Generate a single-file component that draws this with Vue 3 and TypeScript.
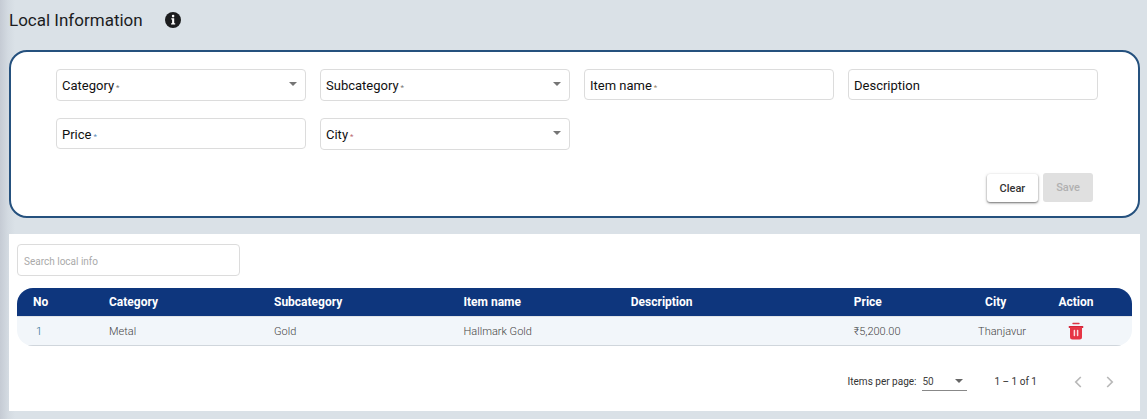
<script setup lang="ts">
import { ref } from 'vue'

interface Field {
  id: string
  label: string
  kind: 'select' | 'text'
  required: boolean
  tint: string
}

interface Item {
  no: number
  category: string
  subcategory: string
  name: string
  description: string
  price: string
  city: string
}

const fields: Field[] = [
  { id: 'category', label: 'Category', kind: 'select', required: true, tint: 'grey' },
  { id: 'subcategory', label: 'Subcategory', kind: 'select', required: true, tint: 'grey' },
  { id: 'item-name', label: 'Item name', kind: 'text', required: true, tint: 'sand' },
  { id: 'description', label: 'Description', kind: 'text', required: false, tint: 'grey' },
  { id: 'price', label: 'Price', kind: 'text', required: true, tint: 'blue' },
  { id: 'city', label: 'City', kind: 'select', required: true, tint: 'rose' },
]

const items = ref<Item[]>([
  {
    no: 1,
    category: 'Metal',
    subcategory: 'Gold',
    name: 'Hallmark Gold',
    description: '',
    price: '₹5,200.00',
    city: 'Thanjavur',
  },
])

const search = ref('')
const pageSize = ref(50)
</script>

<template>
  <main class="page">
    <header class="heading">
      <h1>Local Information</h1>
      <button type="button" class="icon-button" aria-label="Information">
        <svg width="16" height="16" viewBox="0 0 16 16">
          <circle cx="8" cy="8" r="8" fill="#1b1c1e" />
          <path d="M6.3 6.3h2.9v5h1v1.2H6.1v-1.2h1V7.5h-.8z" fill="#fff" />
          <circle cx="8.1" cy="4.1" r="1.3" fill="#fff" />
        </svg>
      </button>
    </header>

    <form class="card form-card" @submit.prevent>
      <div class="fields">
        <div v-for="field in fields" :key="field.id" class="field" :class="field.kind">
          <select v-if="field.kind === 'select'" :id="field.id">
            <option value=""></option>
          </select>
          <input v-else :id="field.id" type="text" />
          <label :for="field.id">
            {{ field.label }}<span v-if="field.required" class="star" :class="field.tint">*</span>
          </label>
          <svg v-if="field.kind === 'select'" class="arrow" width="8" height="4" viewBox="0 0 8 4">
            <path d="M0 0h8L4 4z" fill="#757575" />
          </svg>
        </div>
      </div>
      <div class="actions">
        <button type="reset" class="button clear">Clear</button>
        <button type="submit" class="button save" disabled>Save</button>
      </div>
    </form>

    <section class="list-card">
      <input
        v-model="search"
        class="search"
        type="text"
        aria-label="Search local info"
        placeholder="Search local info"
      />
      <table>
        <colgroup>
          <col class="col-no" />
          <col class="col-category" />
          <col class="col-subcategory" />
          <col class="col-name" />
          <col class="col-description" />
          <col class="col-price" />
          <col class="col-city" />
          <col />
        </colgroup>
        <thead>
          <tr>
            <th class="no">No</th>
            <th>Category</th>
            <th>Subcategory</th>
            <th>Item name</th>
            <th>Description</th>
            <th>Price</th>
            <th class="city">City</th>
            <th>Action</th>
          </tr>
        </thead>
        <tbody>
          <tr v-for="item in items" :key="item.no">
            <td class="no">{{ item.no }}</td>
            <td>{{ item.category }}</td>
            <td>{{ item.subcategory }}</td>
            <td>{{ item.name }}</td>
            <td>{{ item.description }}</td>
            <td>{{ item.price }}</td>
            <td>{{ item.city }}</td>
            <td class="action">
              <button type="button" class="icon-button" aria-label="Delete">
                <svg width="16" height="18" viewBox="0 0 16 18">
                  <path d="M5 1.5h6" stroke="#dc3545" stroke-width="1.4" stroke-linecap="round" />
                  <path d="M1.5 5h13" stroke="#d32438" stroke-width="1.8" stroke-linecap="round" />
                  <path d="M2 5h12v10a2.5 2.5 0 0 1-2.5 2.5h-7A2.5 2.5 0 0 1 2 15z" fill="#e63545" />
                  <path d="M6.4 8.5v5M9.6 8.5v5" stroke="#fbdde0" stroke-width="1.5" stroke-linecap="round" />
                </svg>
              </button>
            </td>
          </tr>
        </tbody>
      </table>

      <nav class="paginator" aria-label="Pagination">
        <label for="page-size">Items per page:</label>
        <div class="page-size">
          <select id="page-size" v-model="pageSize">
            <option :value="50">50</option>
          </select>
          <svg class="arrow" width="8" height="4" viewBox="0 0 8 4">
            <path d="M0 0h8L4 4z" fill="#666" />
          </svg>
        </div>
        <span class="range">1 – 1 of 1</span>
        <button type="button" class="icon-button" aria-label="Previous page" disabled>
          <svg width="8" height="12" viewBox="0 0 8 12">
            <path d="M6.8 1L1.8 6l5 5" fill="none" stroke="#b8b8b8" stroke-width="1.7" />
          </svg>
        </button>
        <button type="button" class="icon-button" aria-label="Next page" disabled>
          <svg width="8" height="12" viewBox="0 0 8 12">
            <path d="M1.2 1l5 5-5 5" fill="none" stroke="#b8b8b8" stroke-width="1.7" />
          </svg>
        </button>
      </nav>
    </section>
  </main>
</template>

<style>
body {
  background: #dae1e7;
}
</style>

<style scoped>
.page {
  box-sizing: border-box;
  min-height: 100vh;
  padding: 0 7px 8px 9px;
  background: linear-gradient(to right, #c5cbd4, #d3dae1 8px, #dae1e7 15px);
  font-family: Roboto, "Liberation Sans", sans-serif;
  color: #1b1c1e;
}

.page * {
  box-sizing: border-box;
}

button,
input,
select {
  font-family: inherit;
}

svg {
  display: block;
}

.heading {
  display: flex;
  align-items: center;
  gap: 22px;
  height: 40px;
}

h1 {
  margin: 0;
  font-size: 17px;
  font-weight: 400;
  line-height: 20px;
}

.icon-button {
  padding: 0;
  border: 0;
  background: none;
}

.form-card {
  margin-top: 10px;
  padding: 17px 40px 14px 45px;
  border: 2px solid #25517e;
  border-radius: 18px;
  background: #fff;
}

.fields {
  display: grid;
  grid-template-columns: repeat(4, 1fr);
  gap: 17px 14px;
}

.field {
  display: grid;
  grid-template-columns: 1fr auto;
  align-items: center;
  align-self: start;
  height: 31px;
}

.field.select {
  height: 32px;
}

.field select,
.field input,
.search {
  width: 100%;
  height: 100%;
  padding: 0 6px;
  border: 1px solid #dcdcdc;
  border-radius: 4px;
  background: #fff;
  appearance: none;
  font-size: 13px;
}

.field select,
.field input {
  grid-area: 1 / 1 / 2 / 3;
}

.field label {
  grid-area: 1 / 1 / 2 / 2;
  align-self: start;
  padding: 9px 0 0 6px;
  font-size: 13px;
  line-height: 16px;
  color: #111;
  pointer-events: none;
}

.star {
  padding-left: 2px;
  font-size: 8px;
  line-height: 8px;
}

.grey {
  color: #777;
}

.sand {
  color: #968468;
}

.blue {
  color: #5f8db8;
}

.rose {
  color: #b86872;
}

.arrow {
  pointer-events: none;
}

.field .arrow {
  grid-area: 1 / 2 / 2 / 3;
  margin: 0 9px 2px 0;
}

.actions {
  display: flex;
  justify-content: flex-end;
  gap: 5px;
  padding: 23px 5px 0 0;
}

.button {
  height: 29px;
  padding: 0 13px;
  border: 0;
  border-radius: 3px;
  font-size: 11px;
  font-weight: 500;
}

.clear {
  height: 28px;
  margin-top: 1px;
  background: #fff;
  color: #333;
  box-shadow: 0 1px 2px rgba(0, 0, 0, 0.5), 0 1px 4px rgba(0, 0, 0, 0.12);
}

.save {
  background: #e0e0e0;
  color: #b0b0b0;
}

.list-card {
  margin-top: 16px;
  padding: 10px 8px 20px;
  background: #fff;
}

.search {
  display: block;
  width: 20%;
  height: 32px;
  padding-top: 3px;
  font-size: 10px;
}

.search::placeholder {
  color: #aaa;
}

table {
  width: 100%;
  margin-top: 12px;
  border-spacing: 0;
  border-radius: 16px;
  overflow: hidden;
  table-layout: fixed;
  background: #f2f6fa;
}

.col-no {
  width: 8.25%;
}

.col-category {
  width: 14.8%;
}

.col-subcategory {
  width: 17%;
}

.col-name {
  width: 15%;
}

.col-description {
  width: 20%;
}

.col-price {
  width: 11.15%;
}

.col-city {
  width: 7.2%;
}

th,
td {
  padding: 0;
  text-align: left;
}

th {
  height: 28px;
  background: #0e367d;
  color: #fff;
  font-size: 12px;
  font-weight: 700;
}

th.no {
  padding-left: 16px;
}

th.city {
  padding-left: 7px;
}

td {
  height: 30px;
  border-top: 1px solid #e0e4e8;
  border-bottom: 1px solid #d0d6dc;
  color: #444;
  font-size: 11px;
  font-weight: 300;
}

td.no {
  padding-left: 19px;
  color: #2b6f90;
}

td.action {
  padding-left: 10px;
}

td .icon-button {
  display: block;
}

.paginator {
  display: flex;
  align-items: center;
  justify-content: flex-end;
  margin-top: 26px;
  padding-right: 18px;
  font-size: 10px;
  color: #333;
}

.page-size {
  display: grid;
  grid-template-columns: 1fr auto;
  align-items: center;
  width: 45px;
  margin-left: 6px;
  border-bottom: 1px solid #888;
}

.page-size select {
  grid-area: 1 / 1 / 2 / 3;
  height: 18px;
  padding: 0;
  border: 0;
  background: none;
  appearance: none;
  font-size: 10px;
  color: #444;
}

.page-size .arrow {
  grid-area: 1 / 2 / 2 / 3;
  margin-right: 4px;
}

.range {
  margin: 0 37px 0 27px;
}

.icon-button + .icon-button {
  margin-left: 24px;
}
</style>
